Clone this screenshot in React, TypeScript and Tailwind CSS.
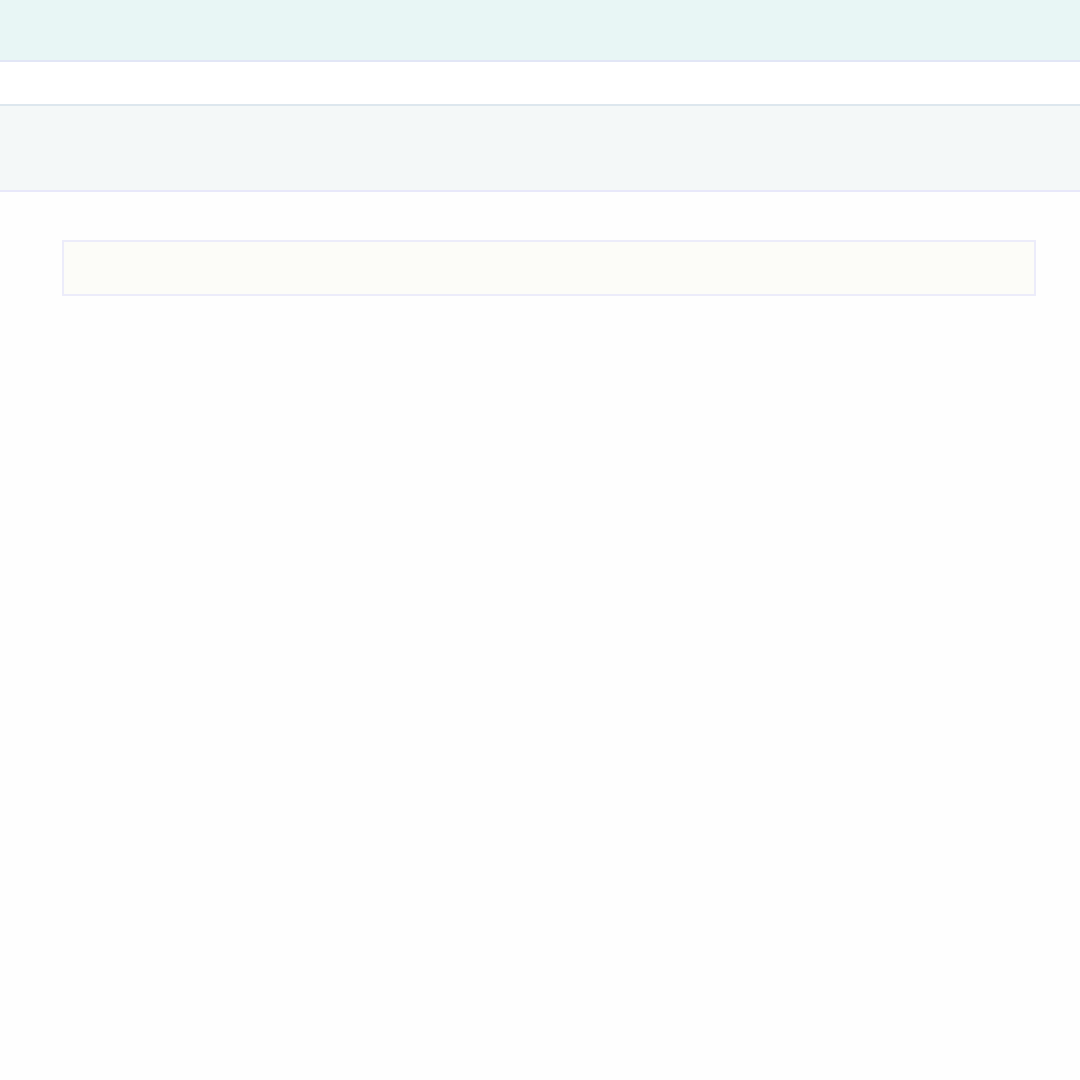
export default function App() {
  return (
    <main className="min-h-screen w-[1080px] bg-[#fefefe]" style={{ fontFamily: '"Liberation Sans", Arial, sans-serif' }}>
      {/* Top bar */}
      <header className="h-[62px] bg-[#e8f6f5] border-b-2 border-[#e2e6f6]" />

      {/* Sub bar */}
      <div className="h-[42px] bg-white" />

      {/* Toolbar band */}
      <section className="h-[88px] bg-[#f4f8f8] border-t-2 border-[#dde7ee] border-b-2 border-b-[#e8e8fa]" />

      {/* Content */}
      <div className="pl-[62px] pr-[44px] pt-[48px]">
        <div className="h-[56px] bg-[#fcfcf8] border-2 border-[#ececfa]" />
      </div>
    </main>
  );
}
